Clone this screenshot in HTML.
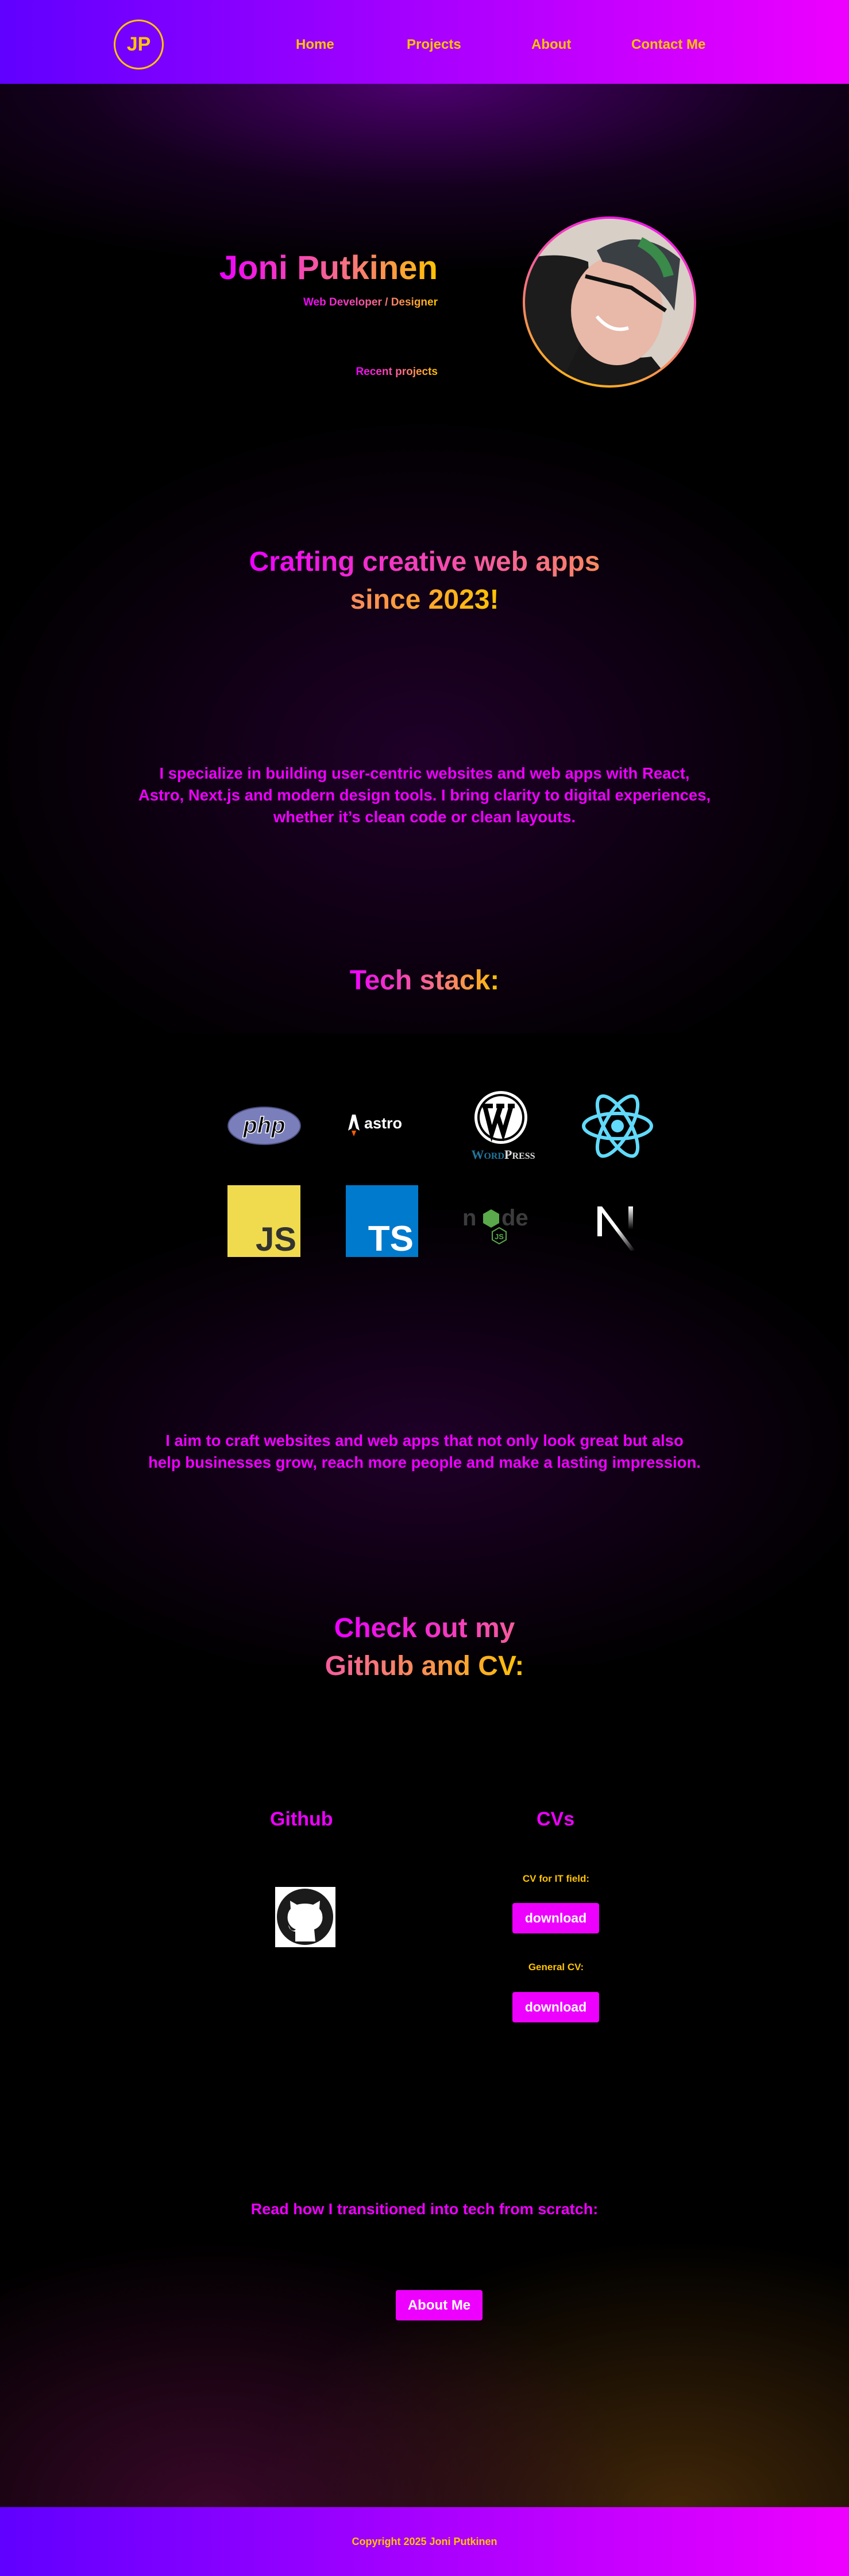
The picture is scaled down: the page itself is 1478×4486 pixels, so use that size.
<!DOCTYPE html>
<html><head><meta charset="utf-8">
<style>
*{margin:0;padding:0;box-sizing:border-box}
html,body{width:1478px;height:4486px;background:#000;overflow:hidden}
body{position:relative;font-family:"Liberation Sans",Arial,sans-serif;font-weight:bold}
.abs{position:absolute}
.c{position:absolute;left:0;width:1478px;text-align:center;white-space:nowrap}
.grad{background:linear-gradient(90deg,#ee00ff,#f76a8c 55%,#ffc400);-webkit-background-clip:text;background-clip:text;color:transparent}
.mag{color:#ee00ff}
.gold{color:#ffc400}
.btn{position:absolute;background:#ee00ff;color:#fff;border-radius:4px;text-align:center}
</style></head><body>
<div class="abs" style="left:0;top:146px;width:1478px;height:330px;background:radial-gradient(ellipse 75% 100% at 50% 0%,rgba(90,0,130,.85),rgba(40,0,60,.5) 55%,rgba(0,0,0,0) 100%)"></div>
<div class="abs" style="left:0;top:600px;width:1478px;height:1200px;background:radial-gradient(ellipse 55% 50% at 50% 60%,rgba(35,0,45,.9),rgba(0,0,0,0) 100%)"></div>
<div class="abs" style="left:0;top:2050px;width:1478px;height:850px;background:radial-gradient(ellipse 55% 50% at 50% 55%,rgba(35,0,45,.9),rgba(0,0,0,0) 100%)"></div>
<div class="abs" style="left:0;top:3900px;width:1478px;height:466px;background:radial-gradient(ellipse 50% 100% at 25% 100%,rgba(70,10,50,.8),rgba(0,0,0,0) 100%),radial-gradient(ellipse 50% 100% at 80% 100%,rgba(75,45,10,.85),rgba(0,0,0,0) 100%)"></div>

<div class="abs" style="left:0;top:0;width:1478px;height:146px;background:linear-gradient(90deg,#6000ff,#a000ff 45%,#ee00ff)"></div>
<div class="abs" style="left:198px;top:34px;width:87px;height:87px;border:3px solid #ffc400;border-radius:50%;color:#ffc400;font-size:34px;line-height:81px;text-align:center">JP</div>
<div class="abs gold" style="left:515px;top:64px;font-size:24px;line-height:28px">Home</div>
<div class="abs gold" style="left:708px;top:64px;font-size:24px;line-height:28px">Projects</div>
<div class="abs gold" style="left:925px;top:64px;font-size:24px;line-height:28px">About</div>
<div class="abs gold" style="left:1099px;top:64px;font-size:24px;line-height:28px">Contact Me</div>

<div class="abs" style="right:716px;top:432px;font-size:58px;line-height:70px;white-space:nowrap"><span class="grad">Joni Putkinen</span></div>
<div class="abs" style="right:716px;top:515px;font-size:19px;line-height:24px;white-space:nowrap"><span class="grad">Web Developer / Designer</span></div>
<div class="abs" style="right:716px;top:636px;font-size:19px;line-height:24px;white-space:nowrap"><span class="grad">Recent projects</span></div>
<div class="abs" style="left:910px;top:377px;width:302px;height:298px;border-radius:50%;background:linear-gradient(200deg,#ee00ff,#f76a8c 50%,#ffc400);padding:4px">
<svg width="294" height="290" viewBox="0 0 294 290" style="display:block;border-radius:50%">
<rect width="294" height="290" fill="#d8cfc6"/>
<path d="M0 70 Q60 55 110 75 L120 290 L0 290Z" fill="#1c1c1c"/>
<path d="M100 210 Q150 250 220 240 L260 290 L60 290Z" fill="#181818"/>
<ellipse cx="160" cy="160" rx="80" ry="95" fill="#e8b8a8"/>
<path d="M125 55 Q200 10 270 70 L260 160 Q220 90 135 75Z" fill="#3a3f44"/>
<path d="M200 40 Q240 60 250 100" stroke="#3a8a4a" stroke-width="18" fill="none"/>
<path d="M105 100 L185 120 L245 160" stroke="#111" stroke-width="7" fill="none"/>
<path d="M125 170 Q150 200 180 190" stroke="#fff" stroke-width="6" fill="none"/>
<path d="M210 290 L290 210 L294 290Z" fill="#1a1a1a"/>
</svg></div>

<div class="c" style="top:946px;font-size:48px;line-height:66px"><span class="grad">Crafting creative web apps<br>since 2023!</span></div>
<div class="c mag" style="top:1328px;font-size:27.5px;line-height:38px">I specialize in building user-centric websites and web apps with React,<br>Astro, Next.js and modern design tools. I bring clarity to digital experiences,<br>whether it’s clean code or clean layouts.</div>

<div class="c" style="top:1680px;font-size:48px;line-height:56px"><span class="grad">Tech stack:</span></div>

<svg class="abs" style="left:396px;top:1927px" width="128" height="67" viewBox="0 0 128 67"><ellipse cx="64" cy="33.5" rx="63" ry="32.5" fill="#7a7fbb" stroke="#4c4f80" stroke-width="2"/><text x="64" y="46" text-anchor="middle" font-family="Liberation Sans" font-style="italic" font-weight="bold" font-size="40" fill="#000" stroke="#fff" stroke-width="1.5">php</text></svg>
<svg class="abs" style="left:600px;top:1935px" width="132" height="50" viewBox="0 0 132 50"><path d="M6 34 L13 6 L19 6 L26 34 L20 30 L16 16 L12 30Z" fill="#fff"/><path d="M12 34 L20 34 L16 44Z" fill="#ff5d01"/><text x="34" y="30" font-family="Liberation Sans" font-weight="bold" font-size="27" fill="#fff">astro</text></svg>
<svg class="abs" style="left:820px;top:1898px" width="112" height="126" viewBox="0 0 112 126"><circle cx="52" cy="48" r="46" fill="#fff"/><circle cx="52" cy="48" r="41" fill="#000"/><circle cx="52" cy="48" r="37" fill="#fff"/><path d="M24 28 L36 76 L46 44 L56 76 L70 28 M52 28 L47 44 M20 28h18 M44 28h14 M64 28h12" stroke="#000" stroke-width="8" fill="none"/><text x="56" y="120" text-anchor="middle" font-family="Liberation Serif" font-size="22" fill="#21759b">W<tspan font-size="16">ORD</tspan><tspan fill="#ddd">P</tspan><tspan fill="#ddd" font-size="16">RESS</tspan></text></svg>
<svg class="abs" style="left:1012px;top:1905px" width="126" height="112" viewBox="0 0 126 112"><g fill="none" stroke="#61dafb" stroke-width="6"><ellipse cx="63" cy="56" rx="59" ry="22"/><ellipse cx="63" cy="56" rx="59" ry="22" transform="rotate(60 63 56)"/><ellipse cx="63" cy="56" rx="59" ry="22" transform="rotate(120 63 56)"/></g><circle cx="63" cy="56" r="11" fill="#61dafb"/></svg>
<svg class="abs" style="left:396px;top:2064px" width="127" height="125" viewBox="0 0 127 125"><rect width="127" height="125" fill="#f0db4f"/><text x="120" y="114" text-anchor="end" font-family="Liberation Sans" font-weight="bold" font-size="58" fill="#323330">JS</text></svg>
<svg class="abs" style="left:602px;top:2064px" width="126" height="125" viewBox="0 0 126 125"><rect width="126" height="125" fill="#007acc"/><text x="118" y="114" text-anchor="end" font-family="Liberation Sans" font-weight="bold" font-size="62" fill="#fff">TS</text></svg>
<svg class="abs" style="left:805px;top:2088px" width="130" height="80" viewBox="0 0 130 80"><text x="0" y="46" font-family="Liberation Sans" font-weight="bold" font-size="40" fill="#3c3c3c">n</text><polygon points="50,18 64,26 64,42 50,50 36,42 36,26" fill="#5aa94a"/><text x="68" y="46" font-family="Liberation Sans" font-weight="bold" font-size="40" fill="#3c3c3c">de</text><polygon points="64,50 76,57 76,71 64,78 52,71 52,57" fill="none" stroke="#5aa94a" stroke-width="2"/><text x="64" y="70" text-anchor="middle" font-family="Liberation Sans" font-size="13" fill="#5aa94a">JS</text></svg>
<svg class="abs" style="left:1040px;top:2101px" width="66" height="77" viewBox="0 0 66 77"><defs><linearGradient id="ng" x1="0" y1="0" x2="1" y2="1"><stop offset="0.5" stop-color="#fff"/><stop offset="1" stop-color="#fff" stop-opacity="0"/></linearGradient><linearGradient id="ng2" x1="0" y1="0" x2="0" y2="1"><stop offset="0" stop-color="#fff"/><stop offset="1" stop-color="#fff" stop-opacity="0"/></linearGradient></defs><rect x="0" y="0" width="8" height="52" fill="#fff"/><path d="M0 0 L8 0 L66 77 L58 77Z" fill="url(#ng)"/><rect x="54" y="0" width="8" height="40" fill="url(#ng2)"/></svg>

<div class="c mag" style="top:2490px;font-size:27.5px;line-height:38px">I aim to craft websites and web apps that not only look great but also<br>help businesses grow, reach more people and make a lasting impression.</div>

<div class="c" style="top:2803px;font-size:48px;line-height:66px"><span class="grad">Check out my<br>Github and CV:</span></div>

<div class="abs mag" style="left:470px;top:3148px;font-size:34px;line-height:40px">Github</div>
<div class="abs mag" style="left:934px;top:3148px;font-size:34px;line-height:40px">CVs</div>
<svg class="abs" style="left:479px;top:3286px" width="105" height="105" viewBox="0 0 105 105"><rect width="105" height="105" fill="#fff"/><ellipse cx="52" cy="52" rx="49" ry="49" fill="#1b1b1b"/><path d="M35 95 L35 78 Q24 76 23 66 L27 74 Q32 78 36 74 Q25 70 22 58 Q20 46 27 38 L26 24 L38 31 Q52 27 66 31 L78 24 L77 38 Q84 46 82 58 Q79 70 68 74 L70 95 Z" fill="#fff"/></svg>
<div class="abs gold" style="left:868px;top:3262px;width:200px;text-align:center;font-size:17px;line-height:20px">CV for IT field:</div>
<div class="btn" style="left:892px;top:3314px;width:151px;height:53px;font-size:23px;line-height:53px">download</div>
<div class="abs gold" style="left:868px;top:3416px;width:200px;text-align:center;font-size:17px;line-height:20px">General CV:</div>
<div class="btn" style="left:892px;top:3469px;width:151px;height:53px;font-size:23px;line-height:53px">download</div>

<div class="c mag" style="top:3830px;font-size:27px;line-height:34px">Read how I transitioned into tech from scratch:</div>
<div class="btn" style="left:689px;top:3988px;width:151px;height:53px;font-size:24px;line-height:53px">About Me</div>

<div class="abs" style="left:0;top:4366px;width:1478px;height:120px;background:linear-gradient(90deg,#6000ff,#a000ff 45%,#ee00ff)"></div>
<div class="c gold" style="top:4414px;font-size:18px;line-height:24px">Copyright 2025 Joni Putkinen</div>
</body></html>
